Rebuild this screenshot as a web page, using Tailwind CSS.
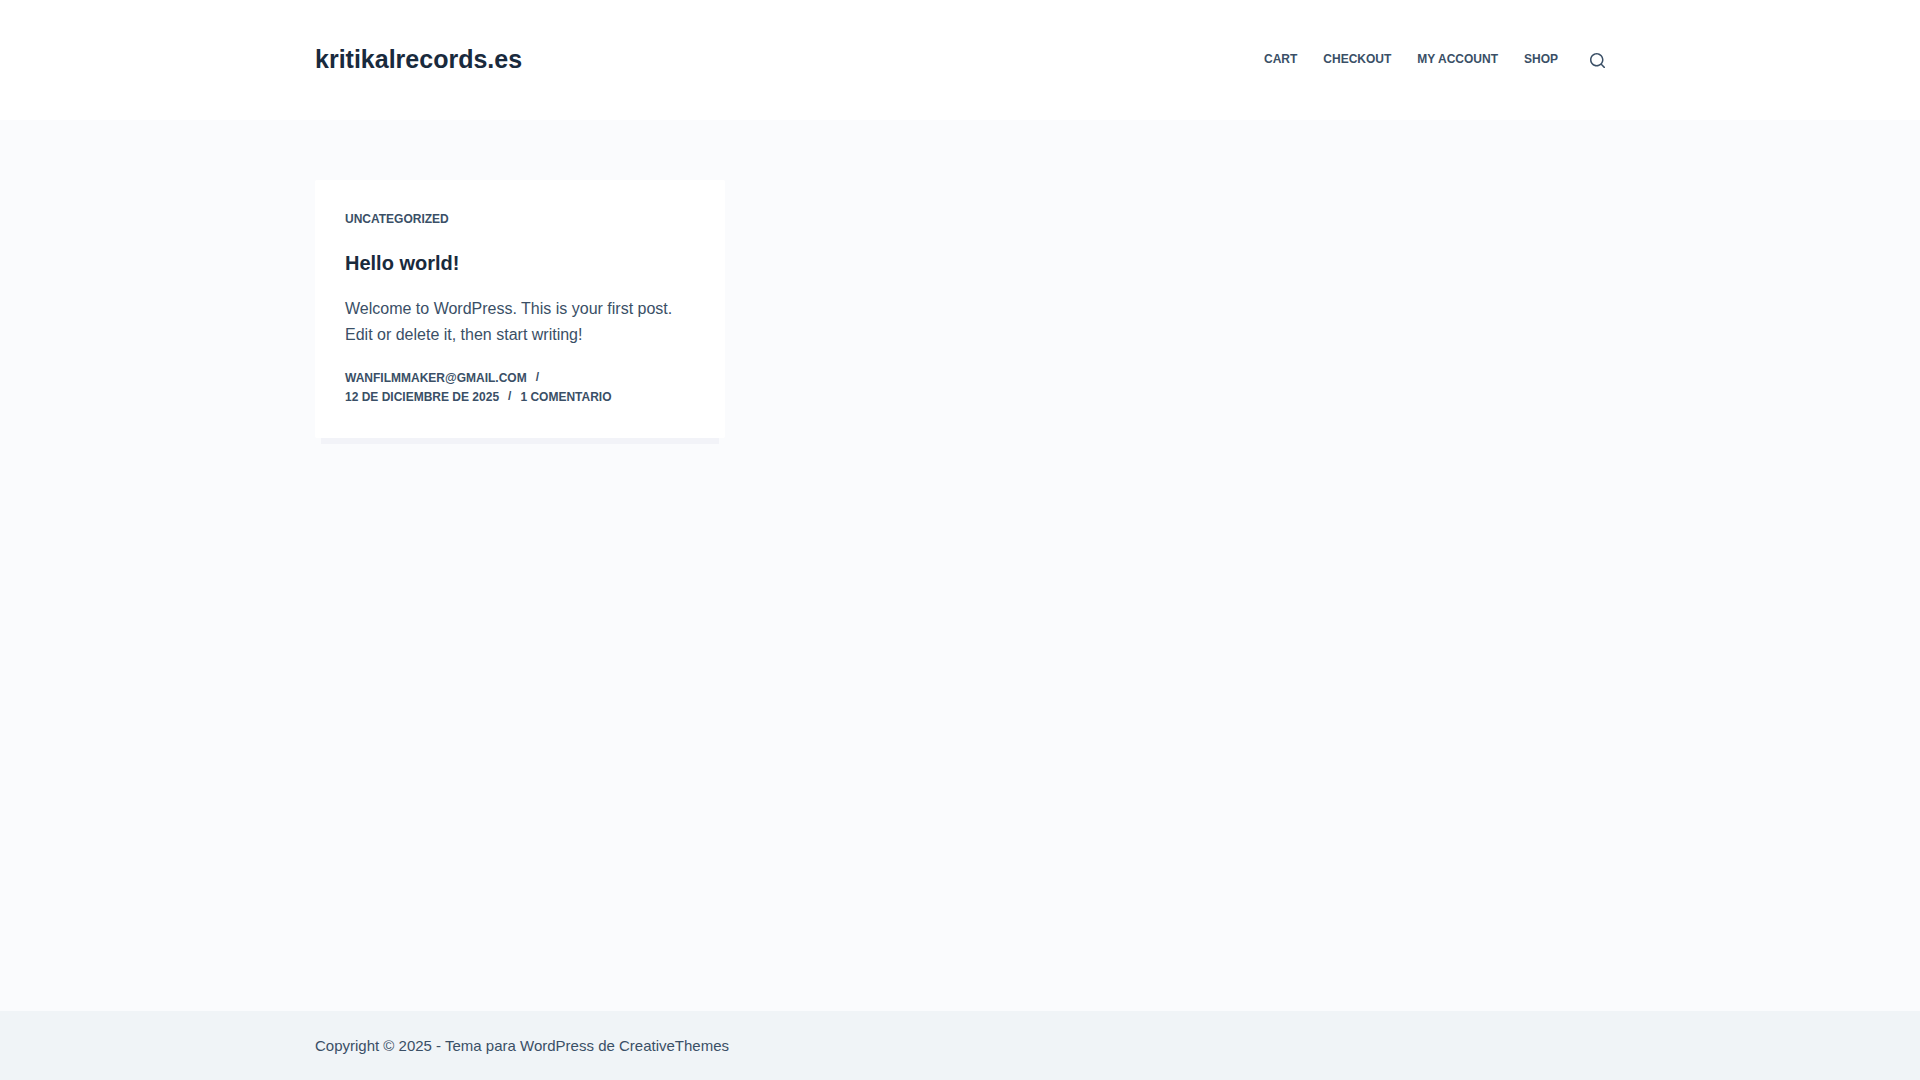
<!DOCTYPE html>
<html lang="es">
<head>
  <meta charset="UTF-8">
  <meta name="viewport" content="width=device-width, initial-scale=1.0">
  <title>kritikalrecords.es</title>
  <script src="https://cdn.jsdelivr.net/npm/@tailwindcss/browser@4"></script>
</head>
<body class="min-h-screen flex flex-col bg-[#fafbfd] text-[#3a4f66] font-['Liberation_Sans',Arial,sans-serif]">
  <header class="bg-white">
    <div class="max-w-[1290px] w-full mx-auto h-[120px] flex items-center justify-between">
      <a href="/" class="pb-0.5 text-[25px] leading-[38px] font-bold text-[#192a3d]">kritikalrecords.es</a>
      <div class="flex items-center gap-8">
        <nav class="flex gap-[26px] pb-0.5 text-xs font-bold uppercase">
          <a href="/cart">Cart</a>
          <a href="/checkout">Checkout</a>
          <a href="/my-account">My account</a>
          <a href="/shop">Shop</a>
        </nav>
        <button type="button" aria-label="Buscar">
          <svg class="size-[15px]" viewBox="0 0 15 15" fill="currentColor" aria-hidden="true">
            <path d="M14.8,13.7L12,11c0.9-1.2,1.5-2.6,1.5-4.2c0-3.7-3-6.8-6.8-6.8S0,3,0,6.8s3,6.8,6.8,6.8c1.6,0,3.1-0.6,4.2-1.5l2.8,2.8c0.1,0.1,0.3,0.2,0.5,0.2s0.4-0.1,0.5-0.2C15.1,14.5,15.1,14,14.8,13.7z M1.5,6.8c0-2.9,2.4-5.2,5.2-5.2S12,3.9,12,6.8S9.6,12,6.8,12S1.5,9.6,1.5,6.8z"/>
          </svg>
        </button>
      </div>
    </div>
  </header>

  <main class="grow max-w-[1290px] w-full mx-auto py-15">
    <div class="grid grid-cols-3 gap-[30px]">
      <article class="bg-white rounded-xs px-[30px] pt-[30px] pb-[31px] shadow-[0_12px_0_-6px_#f2f3f8]">
        <a href="/uncategorized" class="block text-xs leading-[18px] font-bold uppercase">Uncategorized</a>
        <h2 class="mt-[22px] text-xl leading-[26px] font-bold text-[#192a3d]"><a href="/hello-world">Hello world!</a></h2>
        <p class="mt-5 text-base leading-[26px]">Welcome to WordPress. This is your first post. Edit or delete it, then start writing!</p>
        <ul class="mt-[21px] flex flex-wrap text-xs leading-[19px] font-bold uppercase">
          <li class="flex items-start"><a href="/author">wanfilmmaker@gmail.com</a><span class="px-[9px] leading-4">/</span></li>
          <li class="flex items-start">12 de diciembre de 2025<span class="px-[9px] leading-4">/</span></li>
          <li><a href="/comments">1 comentario</a></li>
        </ul>
      </article>
    </div>
  </main>

  <footer class="bg-[#f0f4f7]">
    <div class="max-w-[1290px] w-full mx-auto py-[22px] text-[15px] leading-[25px]">
      Copyright © 2025 - Tema para WordPress de <a href="https://creativethemes.com">CreativeThemes</a>
    </div>
  </footer>
</body>
</html>
